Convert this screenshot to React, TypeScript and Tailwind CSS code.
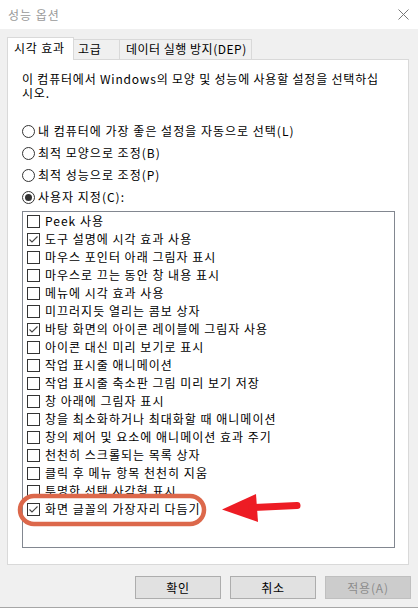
import React from "react";

const items = [
  { label: "Peek 사용" },
  { label: "도구 설명에 시각 효과 사용", checked: true },
  { label: "마우스 포인터 아래 그림자 표시" },
  { label: "마우스로 끄는 동안 창 내용 표시" },
  { label: "메뉴에 시각 효과 사용" },
  { label: "미끄러지듯 열리는 콤보 상자" },
  { label: "바탕 화면의 아이콘 레이블에 그림자 사용", checked: true },
  { label: "아이콘 대신 미리 보기로 표시" },
  { label: "작업 표시줄 애니메이션" },
  { label: "작업 표시줄 축소판 그림 미리 보기 저장" },
  { label: "창 아래에 그림자 표시" },
  { label: "창을 최소화하거나 최대화할 때 애니메이션" },
  { label: "창의 제어 및 요소에 애니메이션 효과 주기" },
  { label: "천천히 스크롤되는 목록 상자" },
  { label: "클릭 후 메뉴 항목 천천히 지움" },
  { label: "투명한 선택 사각형 표시" },
  { label: "화면 글꼴의 가장자리 다듬기", checked: true },
];

const radios = [
  { label: "내 컴퓨터에 가장 좋은 설정을 자동으로 선택(L)" },
  { label: "최적 모양으로 조정(B)" },
  { label: "최적 성능으로 조정(P)" },
  { label: "사용자 지정(C):", selected: true },
];

function Radio({ selected }: { selected?: boolean }) {
  return (
    <svg width="13" height="13" viewBox="0 0 13 13" className="shrink-0">
      <circle cx="6.5" cy="6.5" r="6" fill="#fff" stroke="#333" strokeWidth="1" />
      {selected && <circle cx="6.5" cy="6.5" r="3.5" fill="#333" />}
    </svg>
  );
}

function Checkbox({ checked }: { checked?: boolean }) {
  return (
    <svg width="13" height="13" viewBox="0 0 13 13" className="shrink-0">
      <rect x="0.5" y="0.5" width="12" height="12" fill="#fff" stroke="#333" strokeWidth="1" />
      {checked && (
        <path d="M2.5 6.5 L5 9 L10.5 3.5" fill="none" stroke="#444" strokeWidth="1.1" />
      )}
    </svg>
  );
}

export default function App() {
  return (
    <div className="relative w-[418px] h-[608px] overflow-hidden bg-[#f0f0f0] border-b border-[#a6a6a6] text-[12px] text-black font-['Noto_Sans_CJK_KR',sans-serif] tracking-[1px]">
      {/* title bar */}
      <div className="h-[29px] bg-white flex items-center justify-between pl-[8px] pr-[9px]">
        <span className="text-[#9a9a9a] text-[12px]">성능 옵션</span>
        <svg width="11" height="11" viewBox="0 0 11 11">
          <path d="M0.5 0.5 L10.5 10.5 M10.5 0.5 L0.5 10.5" stroke="#777" strokeWidth="1" />
        </svg>
      </div>

      {/* tabs */}
      <div className="mt-[8px] pl-[7px] flex items-end h-[22px] whitespace-nowrap tracking-[0.8px]">
        <div className="relative z-10 -mb-px h-[23px] w-[67px] bg-white border-l border-t border-r border-[#d9d9d9] pl-[6px] pt-[2px] leading-[16px]">
          시각 효과
        </div>
        <div className="h-[20px] w-[46px] border-t border-r border-[#d9d9d9] pl-[4px] leading-[18px]">
          고급
        </div>
        <div className="h-[20px] w-[132px] border-t border-r border-[#d9d9d9] pl-[6px] leading-[18px] tracking-[0.5px]">
          데이터 실행 방지(DEP)
        </div>
      </div>

      {/* panel */}
      <div className="ml-[7px] w-[402px] h-[506px] bg-white border border-[#d9d9d9] pl-[14px] pt-[12px]">
        <p className="leading-[14px] whitespace-nowrap tracking-[0.8px]">
          이 컴퓨터에서 Windows의 모양 및 성능에 사용할 설정을 선택하십
          <br />
          시오.
        </p>

        <div className="mt-[20px] flex flex-col">
          {radios.map((r) => (
            <div key={r.label} className="h-[22px] flex items-center gap-[3px]">
              <Radio selected={r.selected} />
              <span>{r.label}</span>
            </div>
          ))}
        </div>

        <div className="mt-[3px] w-[373px] h-[337px] border border-[#828790] bg-white pl-[4px]">
          {items.map((it) => (
            <div key={it.label} className="h-[18px] flex items-center gap-[5px]">
              <Checkbox checked={it.checked} />
              <span className="whitespace-nowrap">{it.label}</span>
            </div>
          ))}
        </div>
      </div>

      {/* buttons */}
      <div className="mt-[11px] flex justify-end pr-[7px] gap-[9px] tracking-[0.8px]">
        <button className="w-[86px] h-[23px] bg-[#e1e1e1] border border-[#adadad] text-black leading-[20px]">
          확인
        </button>
        <button className="w-[86px] h-[23px] bg-[#e1e1e1] border border-[#adadad] text-black leading-[20px]">
          취소
        </button>
        <button className="w-[86px] h-[23px] bg-[#cccccc] border border-[#bfbfbf] text-[#8c8c8c] leading-[20px]">
          적용(A)
        </button>
      </div>

      {/* annotation overlay */}
      <svg
        className="absolute left-0 top-0 pointer-events-none"
        width="418"
        height="608"
        viewBox="0 0 418 608"
      >
        <rect x="20" y="496" width="184" height="28" rx="14" fill="none" stroke="#dc684b" strokeWidth="4.5" />
        <path d="M222 509.5 L256 494 L258 522 Z" fill="#ed1c24" />
        <path d="M252 507.5 L297 505.5" stroke="#ed1c24" strokeWidth="7" strokeLinecap="round" />
      </svg>
    </div>
  );
}
